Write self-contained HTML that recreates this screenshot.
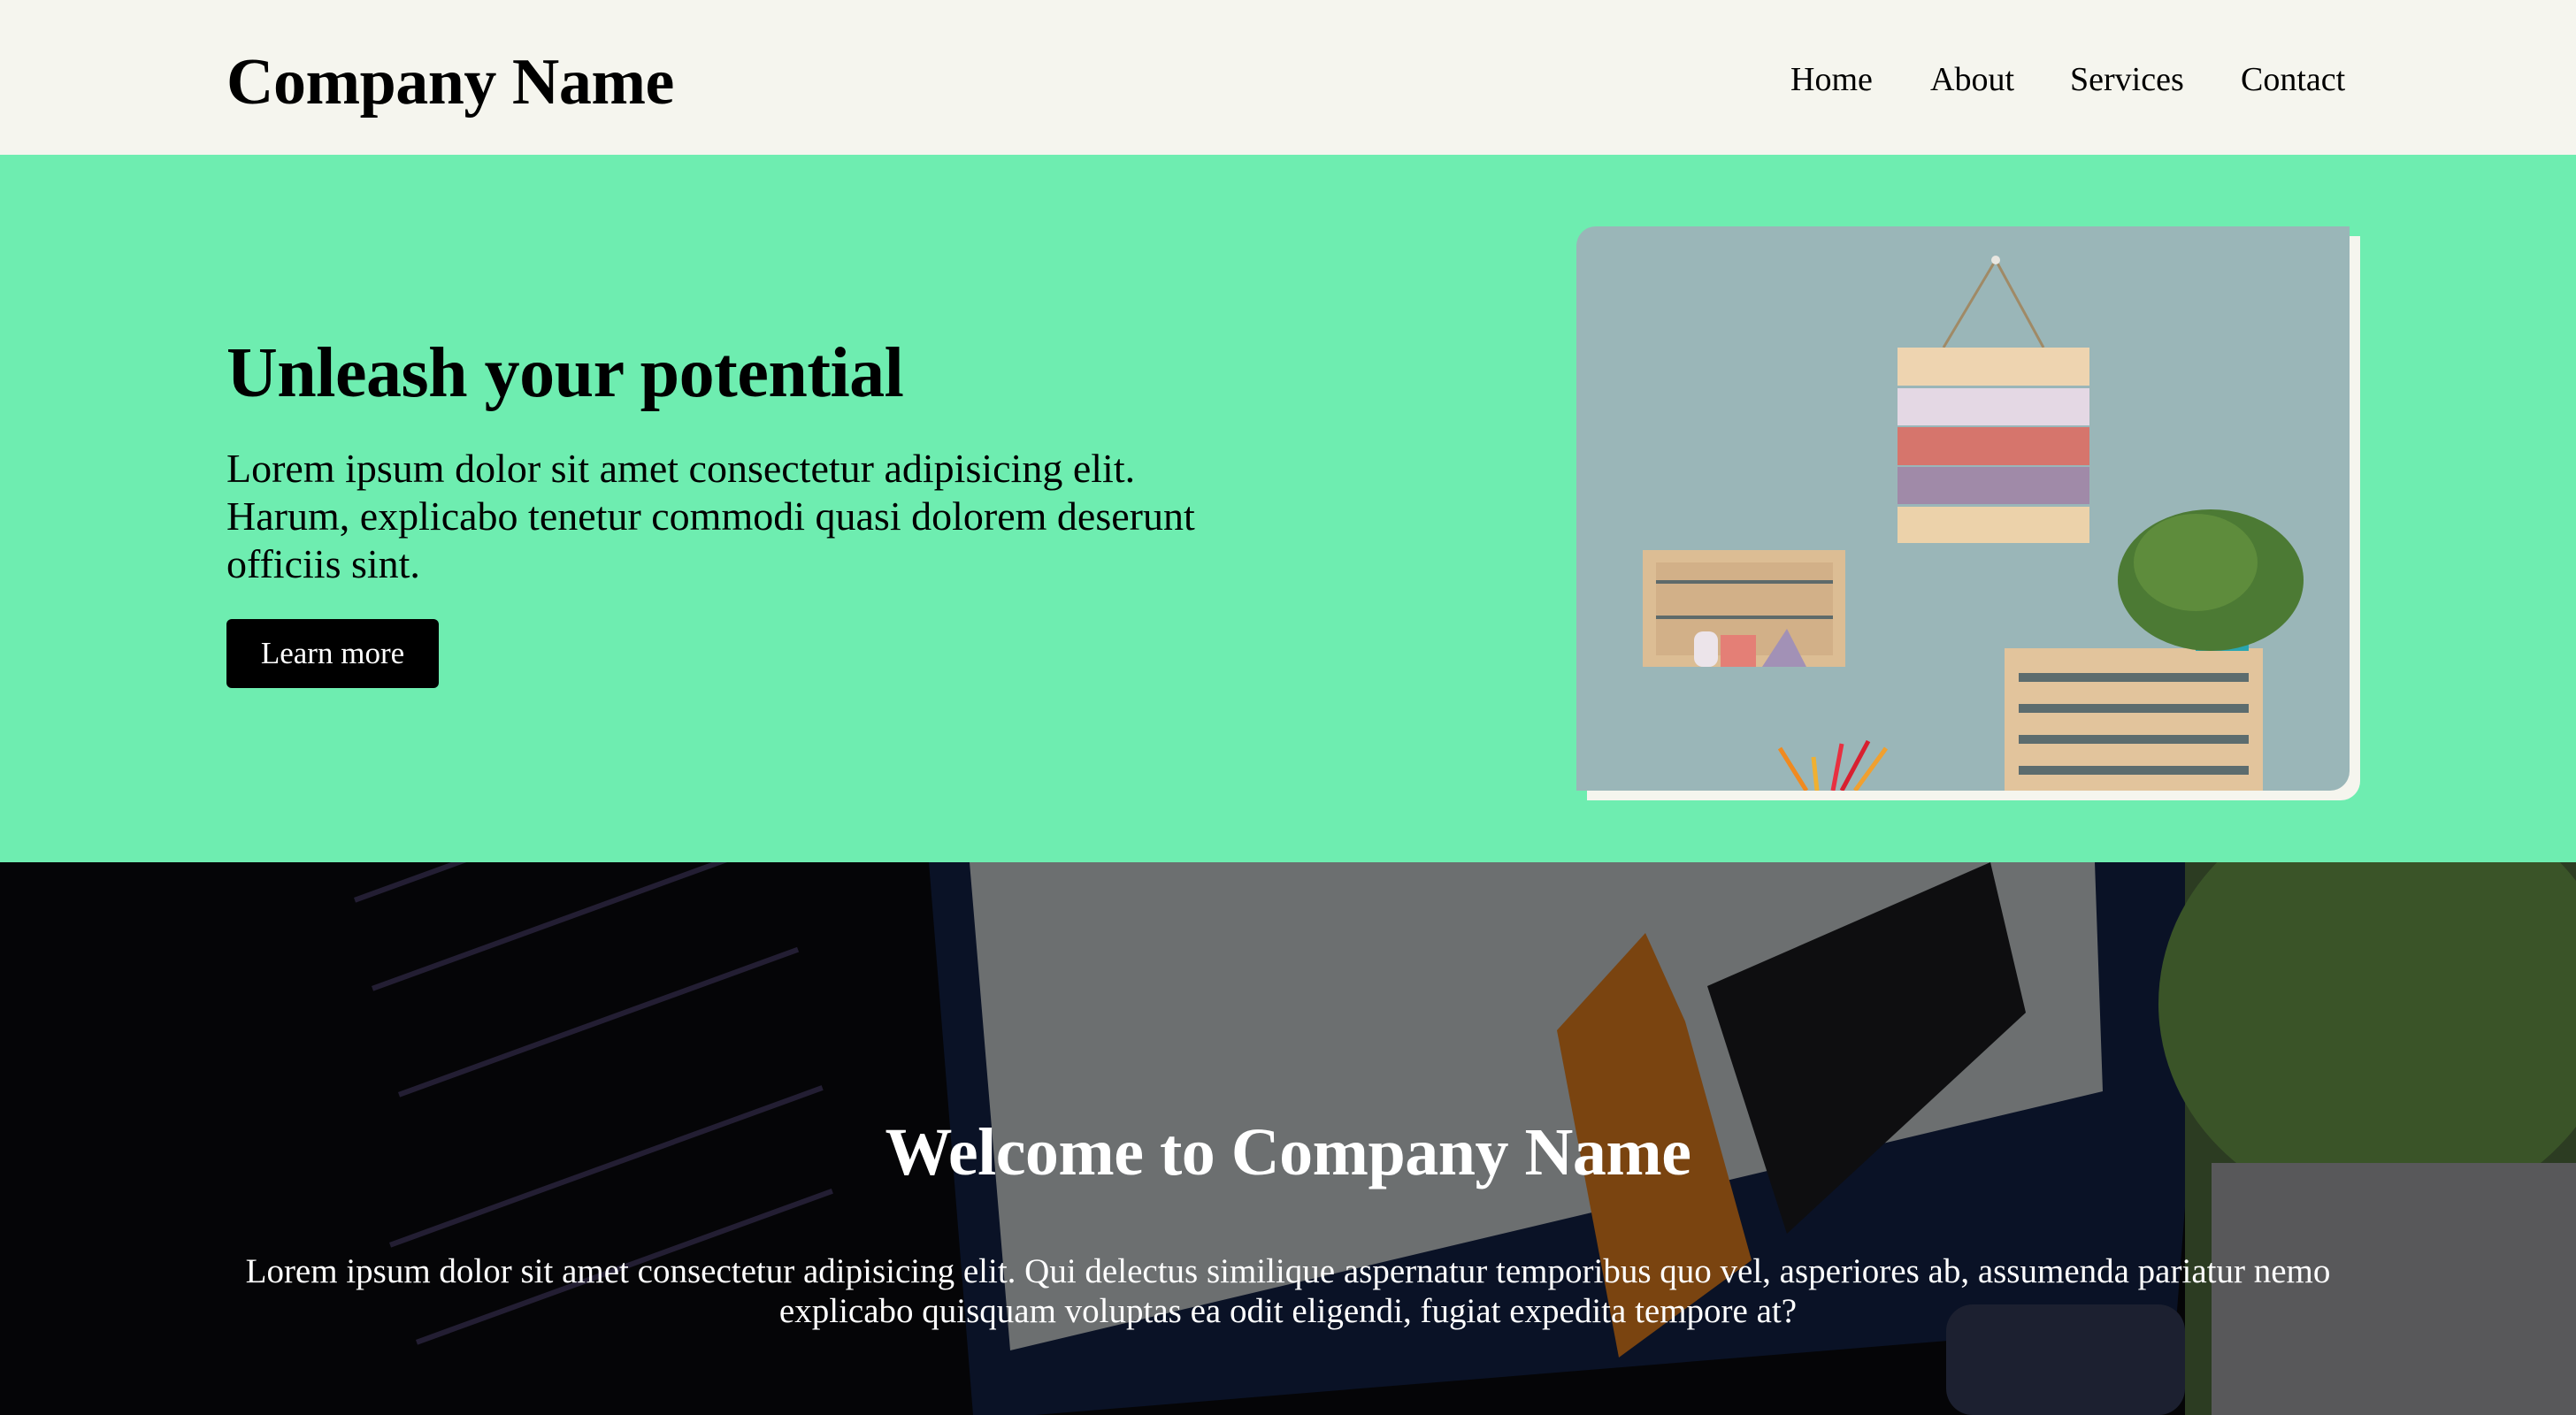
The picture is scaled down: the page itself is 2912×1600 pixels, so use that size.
<!DOCTYPE html>
<html><head><meta charset="utf-8"><style>
*{margin:0;padding:0;box-sizing:border-box}
body{width:2912px;height:1600px;overflow:hidden;font-family:"Liberation Serif",serif;background:#fff;position:relative}
.hdr{position:absolute;left:0;top:0;width:2912px;height:175px;background:#f5f5ee}
.logo{position:absolute;left:256px;top:51px;font-size:74px;font-weight:bold;color:#000;white-space:nowrap;letter-spacing:-0.5px}
.nav{position:absolute;top:68px;font-size:38px;color:#000;white-space:nowrap}
.hero{position:absolute;left:0;top:175px;width:2912px;height:800px;background:#6eedb0}
h1{position:absolute;left:256px;top:202px;font-size:80px;font-weight:bold;white-space:nowrap;letter-spacing:-0.5px}
.p{position:absolute;left:256px;top:328px;width:1400px;font-size:46px;line-height:54px;white-space:nowrap}
.btn{position:absolute;left:256px;top:525px;width:240px;height:78px;background:#000;color:#fff;border-radius:6px;font-size:35px;text-align:center;line-height:78px}
.back{position:absolute;left:1794px;top:92px;width:874px;height:638px;background:#f5f5ee;border-radius:0 0 22px 0}
.img{position:absolute;left:1782px;top:81px;width:874px;height:638px;background:#9ab6b8;border-radius:22px 0 22px 0;overflow:hidden}
.dark{position:absolute;left:0;top:975px;width:2912px;height:625px;background:#050507;overflow:hidden}
.t2{position:absolute;left:0;top:285px;width:2912px;text-align:center;color:#fff;font-size:76px;font-weight:bold;letter-spacing:-0.5px}
.p2{position:absolute;left:156px;top:440px;width:2600px;text-align:center;color:#fff;font-size:39px;line-height:45px}
</style></head><body>
<div class="hdr">
<div class="logo">Company Name</div>
<div class="nav" style="left:2024px">Home</div>
<div class="nav" style="left:2182px">About</div>
<div class="nav" style="left:2340px">Services</div>
<div class="nav" style="left:2533px">Contact</div>
</div>
<div class="hero">
<h1>Unleash your potential</h1>
<div class="p">Lorem ipsum dolor sit amet consectetur adipisicing elit.<br>Harum, explicabo tenetur commodi quasi dolorem deserunt<br>officiis sint.</div>
<div class="btn">Learn more</div>
<div class="back"></div>
<div class="img">
<svg width="874" height="638" viewBox="0 0 874 638">
<line x1="474" y1="38" x2="415" y2="137" stroke="#a08a66" stroke-width="3"/>
<line x1="474" y1="38" x2="528" y2="137" stroke="#a08a66" stroke-width="3"/>
<circle cx="474" cy="38" r="5" fill="#e8e6e0"/>
<rect x="363" y="137" width="217" height="43" fill="#eed4b0"/>
<rect x="363" y="183" width="217" height="42" fill="#e4d8e4"/>
<rect x="363" y="227" width="217" height="43" fill="#d6756c"/>
<rect x="363" y="272" width="217" height="42" fill="#a08aa8"/>
<rect x="363" y="317" width="217" height="41" fill="#ecd2aa"/>
<rect x="75" y="366" width="229" height="132" fill="#dcbd94"/>
<rect x="90" y="380" width="200" height="105" fill="#d2b088"/>
<rect x="90" y="400" width="200" height="4" fill="#5e6a6a"/>
<rect x="90" y="440" width="200" height="4" fill="#5e6a6a"/>
<rect x="133" y="458" width="27" height="40" rx="10" fill="#ece4ea"/>
<rect x="163" y="462" width="40" height="36" fill="#e47f76"/>
<polygon points="210,498 260,498 238,455" fill="#a291b6"/>
<rect x="484" y="477" width="292" height="161" fill="#e2c49c"/>
<rect x="500" y="505" width="260" height="10" fill="#5c6c6e"/>
<rect x="500" y="540" width="260" height="10" fill="#5c6c6e"/>
<rect x="500" y="575" width="260" height="10" fill="#5c6c6e"/>
<rect x="500" y="610" width="260" height="10" fill="#5c6c6e"/>
<rect x="700" y="430" width="60" height="50" fill="#2aa6b0"/>
<ellipse cx="717" cy="400" rx="105" ry="80" fill="#4c7a34"/>
<ellipse cx="700" cy="380" rx="70" ry="55" fill="#5e8c3c"/>
<g stroke-width="5"><line x1="230" y1="590" x2="260" y2="638" stroke="#f08a20"/><line x1="268" y1="600" x2="272" y2="638" stroke="#f0b030"/><line x1="300" y1="585" x2="290" y2="638" stroke="#e83040"/><line x1="330" y1="582" x2="300" y2="638" stroke="#d82030"/><line x1="350" y1="590" x2="315" y2="638" stroke="#f0a030"/></g>
</svg>
</div>
</div>
<div class="dark">
<svg width="2912" height="625" viewBox="0 0 2912 625" style="position:absolute;left:0;top:0">
<polygon points="1050,0 2500,0 2460,520 1170,625 1100,625" fill="#0a1226"/>
<polygon points="1096,0 2368,0 2377,259 1142,552" fill="#6c6f70"/>
<polygon points="1760,190 1860,80 1905,180 1980,450 1830,560" fill="#7a4410"/>
<polygon points="1930,140 2250,0 2290,170 2020,420" fill="#0e0e10"/>
<rect x="2470" y="0" width="442" height="625" fill="#2c3c22"/>
<ellipse cx="2700" cy="160" rx="260" ry="240" fill="#3a5428"/>
<rect x="2500" y="340" width="412" height="285" fill="#58585a"/>
<rect x="2200" y="500" width="270" height="125" rx="30" fill="#1c2030"/>
<g fill="#6a5a9a" opacity="0.3"><rect x="400" y="40" width="500" height="6" transform="rotate(-20 400 40)"/><rect x="420" y="140" width="520" height="6" transform="rotate(-20 420 140)"/><rect x="450" y="260" width="480" height="6" transform="rotate(-20 450 260)"/><rect x="440" y="430" width="520" height="6" transform="rotate(-20 440 430)"/><rect x="470" y="540" width="500" height="6" transform="rotate(-20 470 540)"/></g>
</svg>
<div class="t2">Welcome to Company Name</div>
<div class="p2">Lorem ipsum dolor sit amet consectetur adipisicing elit. Qui delectus similique aspernatur temporibus quo vel, asperiores ab, assumenda pariatur nemo<br>explicabo quisquam voluptas ea odit eligendi, fugiat expedita tempore at?</div>
</div>
</body></html>
